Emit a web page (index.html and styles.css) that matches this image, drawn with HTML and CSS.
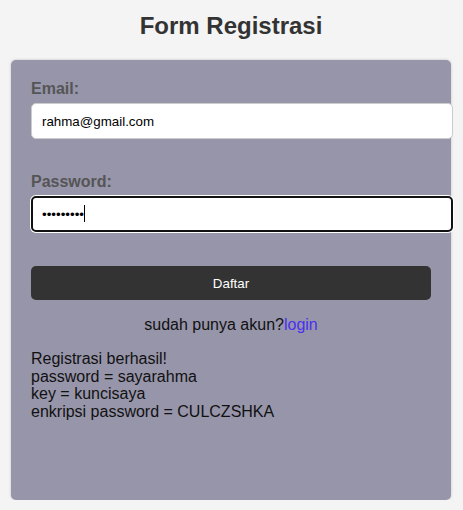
FILE: index.html
```html
<!DOCTYPE html>
<html>
<head>
<meta charset="utf-8">
<link rel="stylesheet" href="styles.css">
</head>
<body>
<h2 class="title">Form Registrasi</h2>
<div class="card">
  <form class="form">
    <label class="label" for="email">Email:</label>
    <input class="field" id="email" type="text" value="rahma@gmail.com">
    <label class="label" for="pw">Password:</label>
    <div class="pw-wrap">
      <input class="field field-focus" id="pw" type="password" value="sayarahma">
      <span class="caret"></span>
    </div>
    <button class="btn" type="button">Daftar</button>
  </form>
  <p class="switch">sudah punya akun?<a class="link" href="#">login</a></p>
  <div class="result">
    Registrasi berhasil!<br>
    password = sayarahma<br>
    key = kuncisaya<br>
    enkripsi password = CULCZSHKA
  </div>
</div>
</body>
</html>
```
FILE: styles.css
```css
html, body {
  margin: 0;
  padding: 0;
}
body {
  background: #f4f4f4;
  font-family: "Liberation Sans", Arial, sans-serif;
  color: #111;
  padding-right: 1px;
}
.title {
  margin: 12px 0 20px;
  text-align: center;
  font-size: 24px;
  line-height: 28px;
  font-weight: bold;
  color: #333;
}
.card {
  width: 400px;
  height: 400px;
  margin: 0 auto;
  padding: 20px;
  background: #9795aa;
  border-radius: 5px;
  box-shadow: 0 0 3px rgba(0,0,0,0.2);
}
.form {
  margin: 0;
}
.label {
  display: block;
  font-size: 16px;
  line-height: 18px;
  font-weight: bold;
  color: #555;
  margin-bottom: 5px;
}
.field {
  display: block;
  width: 100%;
  box-sizing: content-box;
  height: 16px;
  padding: 9px 10px;
  margin: 0 0 34px;
  border: 1px solid #ccc;
  border-radius: 5px;
  background: #fff;
  font-family: "Liberation Sans", Arial, sans-serif;
  font-size: 13.33px;
  color: #000;
  outline: none;
}
.pw-wrap {
  position: relative;
}
.field-focus {
  border: 2px solid #111;
  padding: 8px 9px;
  box-shadow: 0 0 0 1px #fff;
}
.caret {
  position: absolute;
  left: 53px;
  top: 9px;
  width: 1px;
  height: 17px;
  background: #000;
}
.btn {
  display: block;
  width: 100%;
  height: 34px;
  border: none;
  border-radius: 5px;
  background: #333;
  color: #fff;
  font-family: "Liberation Sans", Arial, sans-serif;
  font-size: 13.33px;
  font-weight: normal;
}
.switch {
  margin: 16px 0;
  text-align: center;
  font-size: 16px;
  line-height: 18px;
}
.link {
  color: #4a30f0;
  text-decoration: none;
}
.result {
  font-size: 16px;
  line-height: 17.67px;
}
```
